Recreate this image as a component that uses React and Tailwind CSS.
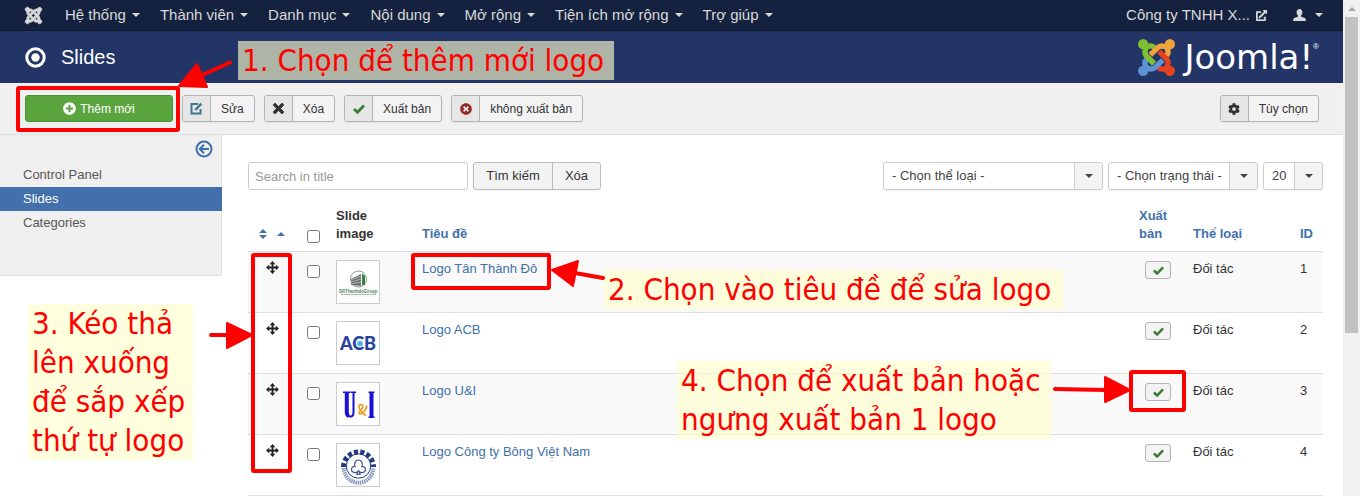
import {
  FaCog,
  FaExternalLinkAlt,
  FaJoomla,
  FaPlusCircle,
  FaTimes,
  FaTimesCircle,
} from 'react-icons/fa';

const menu = ['Hệ thống', 'Thành viên', 'Danh mục', 'Nội dung', 'Mở rộng', 'Tiện ích mở rộng', 'Trợ giúp'];

const slides = [
  { id: 1, title: 'Logo Tân Thành Đô', Thumb: ThumbTanThanhDo },
  { id: 2, title: 'Logo ACB', Thumb: ThumbAcb },
  { id: 3, title: 'Logo U&I', Thumb: ThumbUI },
  { id: 4, title: 'Logo Công ty Bông Việt Nam', Thumb: ThumbCotton },
];

function Caret() {
  return (
    <svg className="w-2 h-1 shrink-0" viewBox="0 0 8 4" fill="currentColor" aria-hidden="true">
      <path d="M0 0h8L4 4z" />
    </svg>
  );
}

function CheckIcon({ size }) {
  return (
    <svg width={size} height={size} viewBox="0 0 12 12" fill="none" stroke="#3d7d35" strokeWidth="2.8" aria-hidden="true">
      <path d="M1 6 4.500 9.300 11 2.500" />
    </svg>
  );
}

function MoveIcon() {
  return (
    <svg className="mx-auto" width="13" height="13" viewBox="0 0 13 13" fill="#222" aria-hidden="true">
      <path d="M5.600 2.500h1.800v8H5.600zM2.500 5.600h8v1.800h-8z" />
      <path d="M6.500 0 9.300 3.200H3.700zM6.500 13 3.700 9.800h5.600zM0 6.500l3.200-2.800v5.600zM13 6.500 9.800 9.300V3.700z" />
    </svg>
  );
}

function EditIcon() {
  return (
    <svg width="13" height="13" viewBox="0 0 13 13" fill="none" stroke="#3f7590" aria-hidden="true">
      <path d="M8 2H1.500v9.500h9V7" strokeWidth="2" />
      <path d="M5.300 8 11.300 1.700" strokeWidth="2.4" />
    </svg>
  );
}

function UserIcon() {
  return (
    <svg width="13" height="12" viewBox="0 0 13 12" fill="currentColor" aria-hidden="true">
      <path d="M6.500 0C8.300 0 9.400 1.300 9.400 3.200c0 1.500-.6 2.700-1.400 3.400v.9l3.600 1.400c.9.4 1.200.9 1.200 1.700V12H.2v-1.400c0-.8.3-1.300 1.200-1.700L5 7.500v-.9C4.200 5.900 3.600 4.700 3.600 3.200 3.600 1.300 4.700 0 6.500 0z" />
    </svg>
  );
}

function JoomlaMark() {
  const piece = (color, turn) => (
    <g transform={`rotate(${turn} 18 18)`} stroke={color} fill="none" strokeWidth="5.200">
      <circle cx="5" cy="5" r="5" fill={color} stroke="none" />
      <path d="M6 6 7.500 9.500C6.200 12.500 6.800 15.200 8.800 17.200L15.500 24" />
      <path d="M6 6 9.500 7.500C12 6.200 14.500 6.600 16.300 8.400" />
    </g>
  );
  return (
    <svg width="37" height="37" viewBox="0 0 36 36" aria-hidden="true">
      {piece('#7fc031', 0)}
      {piece('#f2a33c', 90)}
      {piece('#e5421f', 180)}
      {piece('#5e92d2', 270)}
      <path d="M8.800 17.200 15.500 24" stroke="#7fc031" strokeWidth="5.200" />
    </svg>
  );
}

function ThumbTanThanhDo() {
  return (
    <svg width="40" height="40" viewBox="0 0 40 40" aria-hidden="true">
      <circle cx="20.500" cy="17" r="8" fill="none" stroke="#7fa783" strokeWidth="1" />
      <path d="m13 17 10-5v12l-10-1z" fill="#6a726f" />
      <path d="m13 18 10-4M13 20l10-3M13 22l10-2" stroke="#c9cfcc" strokeWidth=".7" />
      <path d="M24 11.500 27 14v9h-3z" fill="#3c7d46" />
      <text x="20" y="30.500" textAnchor="middle" fontFamily="Liberation Sans" fontWeight="700" fontSize="4.500" fill="#4b8a55">SRThanhdoGroup</text>
      <path d="M3 32.500h35" stroke="#9aa79c" strokeDasharray="2 .6" />
    </svg>
  );
}

function ThumbAcb() {
  return (
    <svg width="40" height="40" viewBox="0 0 40 40" aria-hidden="true">
      <text x="20" y="27" textAnchor="middle" fontFamily="Lato" fontWeight="900" fontSize="18" fill="#2a429b">ACB</text>
      <circle cx="22" cy="20.500" r="2.800" fill="#48b1f0" />
    </svg>
  );
}

function ThumbUI() {
  return (
    <svg width="40" height="40" viewBox="0 0 40 40" fill="none" aria-hidden="true">
      <path d="M8.500 8v19c0 4 1.500 5.500 4 5.500s3-1.500 3-4V8" stroke="#1b0fd6" strokeWidth="2" />
      <path d="M8.800 8v20c0 2 .7 3.500 2 4" stroke="#1b0fd6" strokeWidth="4" />
      <path d="M5 8.300h7.500M13 8.300h5M30.500 8.300h6M30.500 33.300h6" stroke="#1b0fd6" strokeWidth="1.500" />
      <path d="M33.500 8v25" stroke="#1b0fd6" strokeWidth="4" />
      <path d="M29 21.500c-1 5-4.500 9-7 8.500-3-1 2.500-4.500 3-7.500.3-2.500-4-2.500-4 .3 0 2.500 4.500 7 7 9" stroke="#f09a1a" strokeWidth="1.600" />
    </svg>
  );
}

function ThumbCotton() {
  return (
    <svg width="40" height="40" viewBox="0 0 40 40" fill="none" aria-hidden="true">
      <path d="M5.500 22A15 15 0 1 1 35.500 22" stroke="#233b85" strokeWidth="5" strokeDasharray="4 2.300" />
      <circle cx="20.500" cy="21" r="12.200" stroke="#233b85" strokeWidth="1" />
      <path d="M5.800 23a14.700 14.700 0 0 0 29.400 0" stroke="#8796bd" strokeWidth="4" strokeDasharray="1.500 .7" />
      <path d="M19.800 26.500c-2 2-6.300 1-6.300-2 0-2.300 2-3.400 3.500-3-1.500-3 .8-6.500 3.500-6.500s5 3.500 3.500 6.500c1.500-.4 3.500.7 3.500 3 0 3-4.300 4-6.300 2l.8 3h-3z" stroke="#3f558f" strokeWidth="1.200" />
    </svg>
  );
}

function ToolButton({ icon, label }) {
  return (
    <button className="flex h-[27px] overflow-hidden rounded-[3px] border border-[#b3b3b3] bg-[#f3f3f3] text-xs text-[#333] shadow-xs">
      <span className="flex h-full w-7 items-center justify-center border-r border-[#b3b3b3] bg-[#e6e6e6]">{icon}</span>
      <span className="flex h-full items-center px-[10px]">{label}</span>
    </button>
  );
}

function Dropdown({ label, value, className }) {
  return (
    <div className={`relative h-7 ${className}`}>
      <select aria-label={label} className="h-7 w-full appearance-none rounded-[3px] border border-[#ccc] bg-white pl-2 text-[13px] text-[#444] shadow-xs">
        <option>{value}</option>
      </select>
      <span className="pointer-events-none absolute inset-y-px right-px flex w-7 items-center justify-center rounded-r-[2px] border-l border-[#ccc] bg-[#f3f3f3] text-[#444]">
        <Caret />
      </span>
    </div>
  );
}

function Note({ className, children }) {
  return (
    <p className={`absolute bg-[#ffffcb]/63 pl-1 font-['DejaVu_Sans_Condensed','DejaVu_Sans',sans-serif] text-[31px] leading-[39px] whitespace-nowrap text-[#f00] ${className}`}>
      {children}
    </p>
  );
}

function Frame({ className }) {
  return <div className={`absolute rounded-[3px] border-4 border-[#f00] ${className}`} />;
}

function Guide() {
  return (
    <div className="pointer-events-none absolute inset-0">
      <Note className="top-[41px] left-[238px] w-[376px]">1. Chọn để thêm mới logo</Note>
      <Note className="top-[270px] left-[604px] w-[459px]">2. Chọn vào tiêu đề để sửa logo</Note>
      <Note className="top-[304px] left-[28px] w-[165px]">
        3. Kéo thả<br />lên xuống<br />để sắp xếp<br />thứ tự logo
      </Note>
      <Note className="top-[361px] left-[677px] w-[374px]">
        4. Chọn để xuất bản hoặc<br />ngưng xuất bản 1 logo
      </Note>

      <Frame className="top-[86px] left-[16px] h-[46px] w-[164px]" />
      <Frame className="top-[253px] left-[411px] h-[37px] w-[140px]" />
      <Frame className="top-[253px] left-[251px] h-[220px] w-[41px]" />
      <Frame className="top-[370px] left-[1129px] h-[42px] w-[57px]" />

      <svg className="absolute top-0 left-0" width="1360" height="496" fill="#f00" stroke="#f00" strokeLinecap="round" strokeLinejoin="round" aria-hidden="true">
        <path d="M230 62.500 200 76M603 278 575 273M211 335h20M1055 389l50 1" strokeWidth="4" />
        <path d="M179 86l18-22 10 23zM552 270l26-9-5 25zM252 335l-25-12v25zM1130 390l-25-13v25z" strokeWidth="2" />
      </svg>
    </div>
  );
}

function NavBar() {
  return (
    <nav className="flex h-[31px] items-center border-b border-[#0e182b] bg-[#14223f] pr-5 pl-6 text-[15px] text-[#d9d9d9]">
      <a href="#" aria-label="Joomla" className="mr-[22px]">
        <FaJoomla size={19} className="stroke-current stroke-[20]" />
      </a>
      <div className="flex gap-5">
        {menu.map((item) => (
          <button key={item} className="flex items-center gap-[6px]">
            {item}
            <Caret />
          </button>
        ))}
      </div>
      <a href="#" className="ml-auto flex items-center gap-[6px]">
        Công ty TNHH X...
        <FaExternalLinkAlt size={11} className="stroke-current stroke-[30]" />
      </a>
      <button aria-label="User" className="ml-[26px] flex items-center gap-[9px]">
        <UserIcon />
        <Caret />
      </button>
    </nav>
  );
}

function Header() {
  return (
    <header className="flex h-[52px] items-center bg-[#233567] pr-6 pl-[25px] text-white">
      <svg width="21" height="21" viewBox="0 0 21 21" fill="none" aria-hidden="true">
        <circle cx="10.500" cy="10.500" r="8.700" stroke="#fff" strokeWidth="3" />
        <circle cx="10.500" cy="10.500" r="4.200" fill="#fff" />
      </svg>
      <h1 className="ml-[15px] text-xl">Slides</h1>
      <div className="ml-auto flex items-center gap-[9px]">
        <JoomlaMark />
        <span className="flex items-start">
          <span className="font-['DejaVu_Sans',sans-serif] text-[34px] leading-9">Joomla!</span>
          <span className="text-[8px] leading-4">®</span>
        </span>
      </div>
    </header>
  );
}

function Toolbar() {
  return (
    <div className="flex h-[52px] items-center gap-[9px] border-b border-[#ddd] bg-[#f0f0f0] pr-6 pl-[25px]">
      <button className="flex h-[27px] w-[148px] items-center justify-center gap-1 rounded-[3px] border border-[#43903a] bg-[#5ba53f] text-xs text-white">
        <FaPlusCircle size={13} />
        Thêm mới
      </button>
      <ToolButton label="Sửa" icon={<EditIcon />} />
      <ToolButton label="Xóa" icon={<FaTimes size={15} className="stroke-current stroke-[30]" />} />
      <ToolButton label="Xuất bản" icon={<CheckIcon size={12} />} />
      <ToolButton label="không xuất bản" icon={<FaTimesCircle size={12} className="text-[#942a25]" />} />
      <div className="ml-auto">
        <ToolButton label="Tùy chọn" icon={<FaCog size={12} />} />
      </div>
    </div>
  );
}

function Sidebar() {
  return (
    <aside className="h-[141px] w-[222px] shrink-0 rounded-br-[3px] border-r border-b border-[#ddd] bg-[#f0f0f0] text-[#555]">
      <div className="flex h-7 items-center justify-end pr-2">
        <button aria-label="Hide sidebar" className="text-[#3d6fb0]">
          <svg width="18" height="18" viewBox="0 0 18 18" fill="none" stroke="currentColor" strokeWidth="2" aria-hidden="true">
            <circle cx="9" cy="9" r="7.500" />
            <path d="M14 9H5M9 4.800 4.800 9 9 13.200" />
          </svg>
        </button>
      </div>
      <a href="#" className="block h-6 pl-[23px] leading-6">Control Panel</a>
      <a href="#" className="-mr-px block h-6 bg-[#4270ac] pl-[23px] leading-6 text-white">Slides</a>
      <a href="#" className="block h-6 pl-[23px] leading-6">Categories</a>
    </aside>
  );
}

function SlideTable() {
  return (
    <table className="mt-[9px] w-full table-fixed leading-[18px]">
      <colgroup>
        <col className="w-[50px]" />
        <col className="w-[30px]" />
        <col className="w-[86px]" />
        <col />
        <col className="w-[54px]" />
        <col className="w-[107px]" />
        <col className="w-[31px]" />
      </colgroup>
      <thead>
        <tr className="text-left align-bottom text-[#4270ac]">
          <th className="py-2 pr-[2px]">
            <a href="#" aria-label="Ordering" className="flex h-[18px] items-center justify-center gap-[10px]">
              <svg width="8" height="10" viewBox="0 0 8 10" fill="currentColor" aria-hidden="true">
                <path d="M0 4h8L4 0zM0 6h8l-4 4z" />
              </svg>
              <svg width="8" height="4" viewBox="0 0 8 4" fill="currentColor" aria-hidden="true">
                <path d="M0 4h8L4 0z" />
              </svg>
            </a>
          </th>
          <th className="py-2 text-center">
            <input type="checkbox" aria-label="Check all" className="mx-auto block size-[13px]" />
          </th>
          <th className="p-2 text-[#333]">Slide image</th>
          <th className="p-2"><a href="#">Tiêu đề</a></th>
          <th className="p-2"><a href="#">Xuất bản</a></th>
          <th className="p-2"><a href="#">Thể loại</a></th>
          <th className="py-2 pl-2"><a href="#">ID</a></th>
        </tr>
      </thead>
      <tbody>
        {slides.map(({ id, title, Thumb }) => (
          <tr key={id} className="border-t border-[#ddd] align-top text-[#333] last:border-b odd:bg-[#f9f9f9]">
            <td className="py-[9px] pr-[2px]">
              <MoveIcon />
            </td>
            <td className="py-2">
              <input type="checkbox" aria-label={title} className="mx-auto mt-[5px] block size-[13px]" />
            </td>
            <td className="p-2">
              <div className="flex size-[44px] items-center justify-center border border-[#ccc] bg-white">
                <Thumb />
              </div>
            </td>
            <td className="p-2"><a href="#" className="text-[#4270ac]">{title}</a></td>
            <td className="py-2">
              <button aria-label="Published" className="mx-auto mt-px flex h-[18px] w-[26px] items-center justify-center rounded-[3px] border border-[#b3b3b3] bg-[#f3f3f3]">
                <CheckIcon size={11} />
              </button>
            </td>
            <td className="p-2">Đối tác</td>
            <td className="py-2 pl-2">{id}</td>
          </tr>
        ))}
      </tbody>
    </table>
  );
}

export default function App() {
  return (
    <div className="relative flex h-screen overflow-hidden bg-white font-['Liberation_Sans',Arial,sans-serif] text-[13px]">
      <div className="min-w-0 flex-1">
        <NavBar />
        <Header />
        <Toolbar />
        <div className="flex items-start">
          <Sidebar />
          <main className="min-w-0 flex-1 pt-[27px] pr-5 pl-[26px]">
            <div className="flex items-center">
              <input type="text" aria-label="Search in title" placeholder="Search in title" className="h-7 w-[220px] rounded-[3px] border border-[#ccc] px-[6px] placeholder:text-[#999]" />
              <button className="ml-[5px] h-7 w-20 rounded-l-[3px] border border-[#bbb] bg-[#f3f3f3] text-[#333] shadow-xs">Tìm kiếm</button>
              <button className="-ml-px h-7 w-[49px] rounded-r-[3px] border border-[#bbb] bg-[#f3f3f3] text-[#333] shadow-xs">Xóa</button>
              <div className="ml-auto flex gap-[5px]">
                <Dropdown label="Thể loại" value="- Chọn thể loại -" className="w-[220px]" />
                <Dropdown label="Trạng thái" value="- Chọn trạng thái -" className="w-[150px]" />
                <Dropdown label="Số dòng" value="20" className="w-[60px]" />
              </div>
            </div>
            <SlideTable />
          </main>
        </div>
      </div>

      {/* scroll bar */}
      <div className="flex w-[17px] shrink-0 flex-col items-center bg-[#f1f1f1]">
        <div className="flex h-[17px] items-center text-[#a3a3a3]">
          <svg width="8" height="4" viewBox="0 0 8 4" fill="currentColor" aria-hidden="true">
            <path d="M0 4h8L4 0z" />
          </svg>
        </div>
        <div className="h-[316px] w-[13px] bg-[#c1c1c1]" />
      </div>

      <Guide />
    </div>
  );
}
